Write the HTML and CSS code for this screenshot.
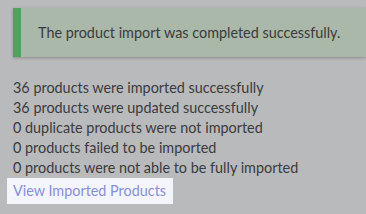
FILE: index.html
```html
<!DOCTYPE html>
<html lang="en">
<head>
    <meta charset="UTF-8">
    <title>Product Import</title>
    <link rel="stylesheet" href="styles.css">
</head>
<body>

    <div class="page">
        <!-- Success notice -->
        <div class="alert alert-success">
            <p>The product import was completed successfully.</p>
        </div>

        <!-- Import summary -->
        <ul class="summary">
            <li>36 products were imported successfully</li>
            <li>36 products were updated successfully</li>
            <li>0 duplicate products were not imported</li>
            <li>0 products failed to be imported</li>
            <li>0 products were not able to be fully imported</li>
        </ul>

        <a class="view-link" href="#">View Imported Products</a>
    </div>

</body>
</html>
```

FILE: styles.css
```css
body {
    margin: 0;
    background-color: #b9babc;
    color: #3b3b3c;
    font-family: 'Lato', 'Open Sans', sans-serif;
    font-size: 14.4px;
}

.page {
    padding: 8px 0 0 13px;
}

.alert {
    background-color: #a9b8a8;
    border-left: 8px solid #4fa35b;
    box-shadow: 0 1px 3px rgba(0, 0, 0, 0.25);
    padding: 0 0 0 17px;
    height: 49px;
    display: flex;
    align-items: center;
}

.alert p {
    margin: 0;
}

.summary {
    list-style: none;
    margin: 21px 0 0;
    padding: 0;
    line-height: 20px;
}

.view-link {
    display: inline-block;
    margin: 0 0 0 -6px;
    padding: 3px 7px 3px 6px;
    line-height: 20px;
    background-color: #f4f5fb;
    color: #8890d4;
    text-decoration: none;
}
```
